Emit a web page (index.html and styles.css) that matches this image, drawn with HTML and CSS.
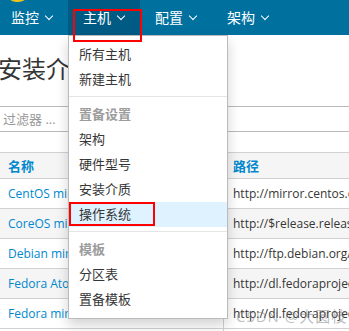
FILE: index.html
```html
<!DOCTYPE html>
<html lang="zh">
<head>
    <meta charset="UTF-8">
    <title>安装介质</title>
    <link rel="stylesheet" href="styles.css">
</head>
<body>
    <div class="navbar">
        <span class="logo-tip"></span>
        <div class="nav-item">监控<span class="caret"></span></div>
        <div class="nav-item active">主机<span class="caret"></span>
            <div class="dropdown">
                <div class="dd-item">所有主机</div>
                <div class="dd-item">新建主机</div>
                <div class="dd-divider"></div>
                <div class="dd-header">置备设置</div>
                <div class="dd-item">架构</div>
                <div class="dd-item">硬件型号</div>
                <div class="dd-item">安装介质</div>
                <div class="dd-item selected">操作系统</div>
                <div class="dd-divider"></div>
                <div class="dd-header">模板</div>
                <div class="dd-item">分区表</div>
                <div class="dd-item">置备模板</div>
            </div>
        </div>
        <div class="nav-item">配置<span class="caret"></span></div>
        <div class="nav-item">架构<span class="caret"></span></div>
    </div>

    <div class="content">
        <h1>安装介质</h1>
        <div class="filter">过滤器 ...</div>
        <table class="table">
            <tr><th class="col-name">名称</th><th class="col-path">路径</th></tr>
            <tr><td><a>CentOS mirror</a></td><td class="path">http://mirror.centos.org/centos/</td></tr>
            <tr class="odd"><td><a>CoreOS mirror</a></td><td class="path">http://$release.release.core-os.net</td></tr>
            <tr><td><a>Debian mirror</a></td><td class="path">http://ftp.debian.org/debian</td></tr>
            <tr class="odd"><td><a>Fedora Atomic mirror</a></td><td class="path">http://dl.fedoraproject.org/pub/</td></tr>
            <tr><td><a>Fedora mirror</a></td><td class="path">http://dl.fedoraproject.org/pub/</td></tr>
            <tr><td></td><td class="path"></td></tr>
        </table>
    </div>

    <div class="mark mark-nav"></div>
    <div class="mark mark-item"></div>
    <div class="watermark">CSDN @大圆枝</div>
</body>
</html>
```

FILE: styles.css
```css
html, body { overflow: hidden; }
body { margin: 0; font-family: "Open Sans", "Noto Sans CJK SC", sans-serif; font-size: 13px; color: #363636; background: #fff; }

.navbar { position: relative; display: flex; height: 35px; margin-left: -4px; background: #00709e; }
.logo-tip { position: absolute; left: 14px; top: -4px; width: 15px; height: 6px; border-radius: 50%; background: #f0c419; }
.nav-item { position: relative; display: flex; align-items: center; padding: 0 16px 0 15px; color: #fff; font-size: 14px; line-height: 35px; }
.nav-item.active { background: #005b84; }
.caret { width: 5px; height: 5px; margin: -4px 0 0 7px; border-right: 1.6px solid #fff; border-bottom: 1.6px solid #fff; transform: rotate(45deg); }

.dropdown { position: absolute; top: 35px; left: 0; z-index: 5; width: 160px; box-sizing: border-box; padding: 6px 0; background: #fff; border: 1px solid #bbb; box-shadow: 0 6px 12px rgba(0,0,0,0.175); }
.dd-item { padding: 0 10px; line-height: 25px; font-size: 13px; color: #363636; }
.dd-item.selected { background: #def3ff; }
.dd-header { padding: 0 10px; line-height: 25px; font-size: 13px; font-weight: bold; color: #9c9c9c; }
.dd-divider { height: 1px; margin: 4px 0 5px; background: #e5e5e5; }

.content { margin-left: -2px; }
h1 { margin: 21px 0 0; font-size: 24px; font-weight: normal; line-height: 26px; color: #363636; }
.filter { height: 26px; box-sizing: border-box; margin: 24px -40px 0 -5px; padding-left: 9px; border: 1px solid #bbb; line-height: 24px; color: #999; font-size: 13px; }

.table { margin-top: 20px; margin-left: 2px; width: 460px; border-collapse: collapse; font-size: 12px; }
.table th, .table td { padding: 0 8px; text-align: left; white-space: nowrap; border-top: 1px solid #d1d1d1; border-bottom: 1px solid #d1d1d1; }
.table th { height: 25px; background: #f5f5f5; color: #0088ce; font-weight: bold; font-size: 13px; }
.table td { height: 29px; }
.table .col-name { width: 207px; }
.table th.col-path, .table td.path { border-left: 1px solid #d1d1d1; padding-left: 9px; }
.table tr.odd td { background: #f5f5f5; }
.table a { color: #0088ce; }

.mark { position: absolute; z-index: 10; border: 2px solid #f00; box-sizing: border-box; }
.mark-nav { left: 73px; top: 9px; width: 69px; height: 33px; }
.mark-item { left: 69px; top: 202px; width: 86px; height: 24px; }

.watermark { position: absolute; left: 236px; top: 305px; z-index: 6; font-size: 15px; color: rgba(110,110,110,0.45); letter-spacing: 1px; }
```
